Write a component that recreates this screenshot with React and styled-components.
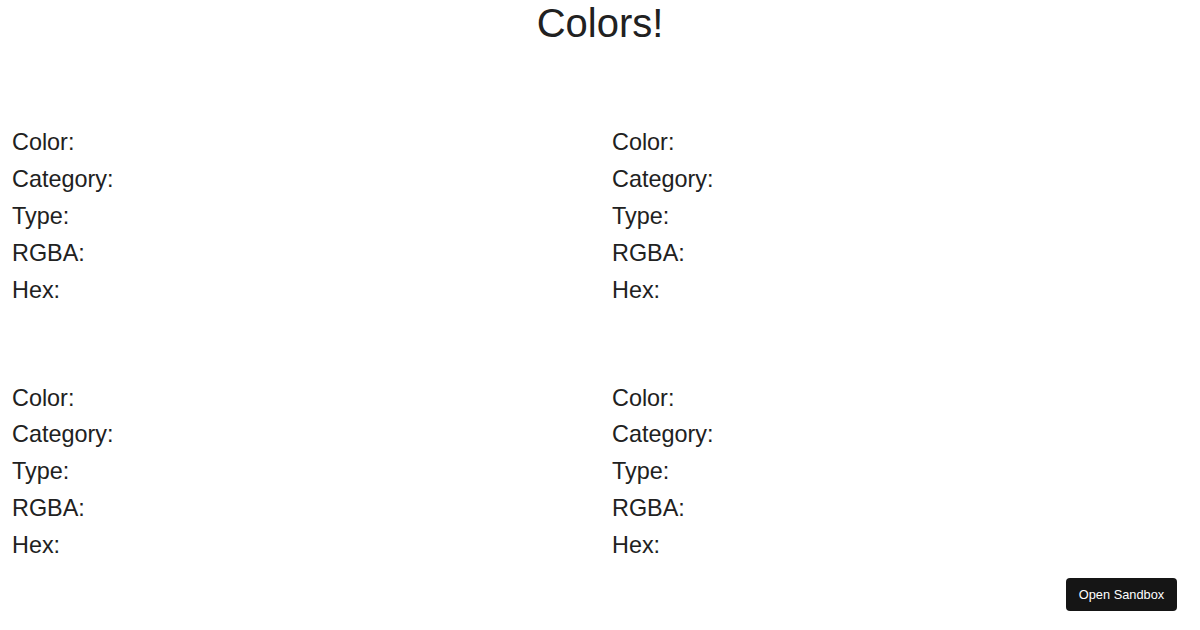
import React from "react";
import styled, { createGlobalStyle } from "styled-components";

const Global = createGlobalStyle`
  html, body { margin: 0; padding: 0; background: #fff; }
  body { font-family: "Liberation Sans", Arial, Helvetica, sans-serif; color: #212121; }
`;

const Page = styled.div`
  display: flex;
  flex-direction: column;
`;

const Title = styled.h1`
  margin: 0;
  text-align: center;
  font-size: 40px;
  font-weight: 400;
  line-height: 46px;
`;

const Grid = styled.div`
  display: grid;
  grid-template-columns: 1fr 1fr;
  row-gap: 71px;
  margin-top: 78px;
`;

const Card = styled.div`
  display: flex;
  flex-direction: column;
  padding-left: 12px;
`;

const Label = styled.div`
  font-size: 23.4px;
  line-height: 36.9px;
`;

const SandboxButton = styled.button`
  position: fixed;
  right: 23px;
  bottom: 19px;
  width: 111px;
  height: 33px;
  border: none;
  border-radius: 4px;
  background: #151515;
  color: #fff;
  font-family: "Liberation Sans", Arial, sans-serif;
  font-size: 12.8px;
  cursor: pointer;
`;

const fields = ["Color:", "Category:", "Type:", "RGBA:", "Hex:"];

export default function App() {
  return (
    <Page>
      <Global />
      <Title>Colors!</Title>
      <Grid>
        {[0, 1, 2, 3].map((i) => (
          <Card key={i}>
            {fields.map((f) => (
              <Label key={f}>{f}</Label>
            ))}
          </Card>
        ))}
      </Grid>
      <SandboxButton>Open Sandbox</SandboxButton>
    </Page>
  );
}
